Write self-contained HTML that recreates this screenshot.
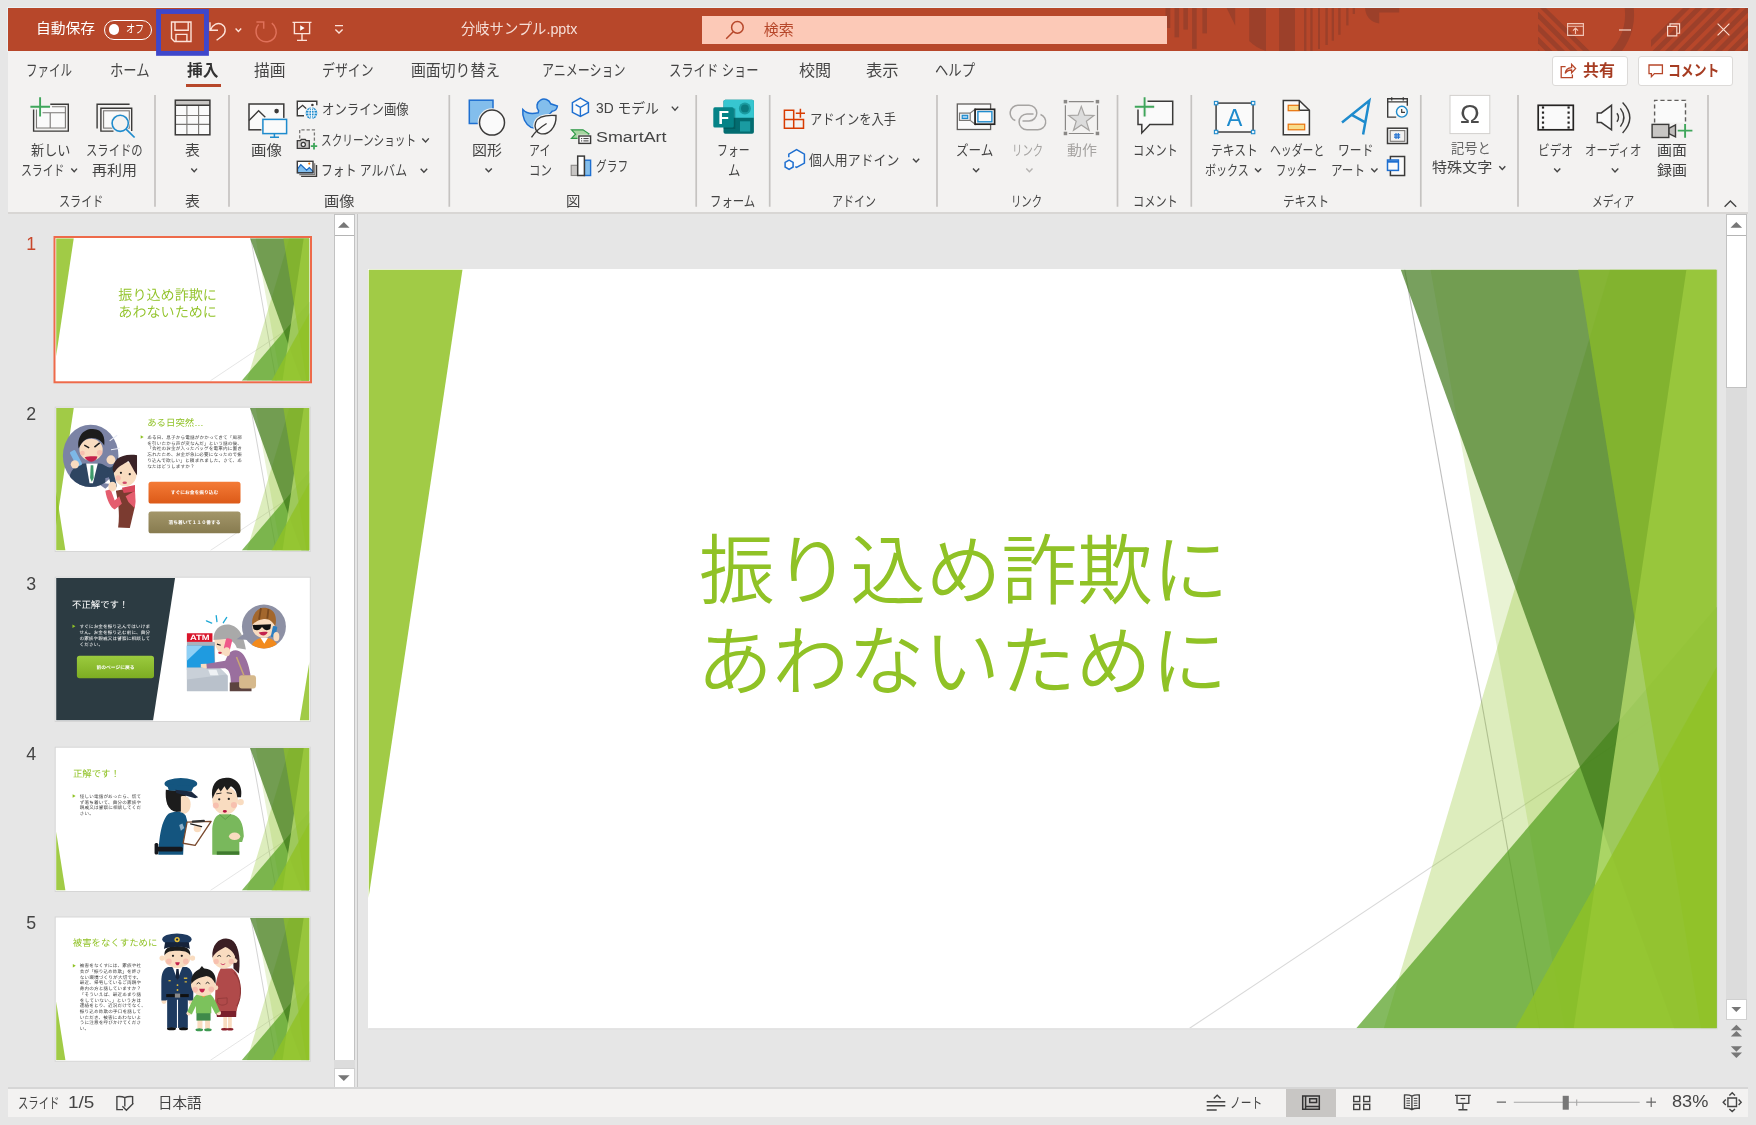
<!DOCTYPE html>
<html lang="ja"><head><meta charset="utf-8"><title>分岐サンプル.pptx - PowerPoint</title>
<style>
html,body{margin:0;padding:0}
body{width:1756px;height:1125px;overflow:hidden;background:#e6e6e6;font-family:"Liberation Sans","Noto Sans CJK JP",sans-serif;}
#win{position:absolute;left:0;top:0;width:1756px;height:1125px;overflow:hidden;will-change:transform}
.t{position:absolute;white-space:nowrap;line-height:1;transform-origin:0 50%;display:block}
.b{position:absolute}
svg{position:absolute;overflow:visible}
.sep{position:absolute;top:95px;width:1px;height:112px;background:#c6c4c2}
</style></head><body><div id="win">
<div class="b" style="left:7px;top:7px;width:1741px;height:1px;background:#ebf2f5"></div><div class="b" style="left:7px;top:7px;width:1px;height:45px;background:#ebf2f5"></div>
<div class="b" style="left:8px;top:8px;width:1740px;height:43.2px;background:#b7472a"></div>
<svg style="left:0;top:0" width="1756" height="60" viewBox="0 0 1756 60"><defs><clipPath id="tbc"><rect x="8" y="8" width="1740" height="43"/></clipPath><clipPath id="dg1"><polygon points="1538,8 1546,8 1590,51 1538,51"/></clipPath><clipPath id="dg2"><polygon points="1651,8 1748,8 1748,51 1651,51"/></clipPath></defs><g clip-path="url(#tbc)" fill="#9c402a"><rect x="1165.5" y="8" width="4.8" height="20.0"/><rect x="1174.5" y="8" width="4.6" height="29.3"/><rect x="1183.4" y="8" width="4.5" height="21.6"/><rect x="1192.1" y="8" width="4.6" height="40.8"/><rect x="1202.4" y="8" width="4.6" height="25.4"/><rect x="1279.1" y="8" width="15.9" height="43.0"/><rect x="1304" y="8" width="2.4" height="43.0"/><rect x="1310.3" y="8" width="2.3" height="43.0"/><rect x="1318" y="8" width="2.0" height="41.0"/><rect x="1325.4" y="8" width="2.4" height="37.0"/><rect x="1331.7" y="8" width="2.3" height="32.7"/><rect x="1338.2" y="8" width="2.4" height="26.8"/><rect x="1346.2" y="8" width="2.3" height="17.4"/><rect x="1352.7" y="8" width="2.3" height="6.0"/><polygon points="1226.6,8 1235.2,8 1235.2,25.4"/><path d="M1249.2 8H1266V51Q1256 48 1249.2 41Z"/><path d="M1365 8Q1366 21 1379.2 23.6V12.5H1399.2V8Z"/><g clip-path="url(#dg1)"><polygon points="1465.0,8 1472.0,8 1515.0,51 1508.0,51"/><polygon points="1477.5,8 1484.5,8 1527.5,51 1520.5,51"/><polygon points="1490.0,8 1497.0,8 1540.0,51 1533.0,51"/><polygon points="1502.5,8 1509.5,8 1552.5,51 1545.5,51"/><polygon points="1515.0,8 1522.0,8 1565.0,51 1558.0,51"/><polygon points="1527.5,8 1534.5,8 1577.5,51 1570.5,51"/><polygon points="1540.0,8 1547.0,8 1590.0,51 1583.0,51"/><polygon points="1552.5,8 1559.5,8 1602.5,51 1595.5,51"/><polygon points="1565.0,8 1572.0,8 1615.0,51 1608.0,51"/><polygon points="1577.5,8 1584.5,8 1627.5,51 1620.5,51"/><polygon points="1590.0,8 1597.0,8 1640.0,51 1633.0,51"/></g><path d="M1598 65A55.5 55.5 0 0 0 1618 -19" fill="none" stroke="#9c402a" stroke-width="9"/><g clip-path="url(#dg2)"><polygon points="1683.0,8 1690.0,8 1647.0,51 1640.0,51"/><polygon points="1695.5,8 1702.5,8 1659.5,51 1652.5,51"/><polygon points="1708.0,8 1715.0,8 1672.0,51 1665.0,51"/><polygon points="1720.5,8 1727.5,8 1684.5,51 1677.5,51"/><polygon points="1733.0,8 1740.0,8 1697.0,51 1690.0,51"/><polygon points="1745.5,8 1752.5,8 1709.5,51 1702.5,51"/><polygon points="1758.0,8 1765.0,8 1722.0,51 1715.0,51"/><polygon points="1770.5,8 1777.5,8 1734.5,51 1727.5,51"/><polygon points="1783.0,8 1790.0,8 1747.0,51 1740.0,51"/><polygon points="1795.5,8 1802.5,8 1759.5,51 1752.5,51"/><polygon points="1808.0,8 1815.0,8 1772.0,51 1765.0,51"/><polygon points="1820.5,8 1827.5,8 1784.5,51 1777.5,51"/></g></g></svg>
<span class="t" style="left:35.80px;top:22.13px;font-size:13.9px;color:#fff;transform:scaleX(1.0643);">自動保存</span>
<div class="b" style="left:103.5px;top:19.5px;width:46px;height:18px;border:1.3px solid #fff;border-radius:11px"></div>
<div class="b" style="left:108.5px;top:24.3px;width:10.5px;height:10.5px;border-radius:50%;background:#fff"></div>
<span class="t" style="left:126.00px;top:23.70px;font-size:11.5px;color:#fff;transform:scaleX(0.7917);">オフ</span>
<svg style="left:170px;top:21px" width="22" height="21" viewBox="0 0 22 21"><path fill="none" stroke="#fde3d9" stroke-width="1.4" d="M1.5 1H21V20.5H4.5L1.5 17.5Z M5 1V9.3H18.2V1 M6 20.5V13.4H16.9V20.5"/></svg>
<svg style="left:208px;top:20px" width="36" height="22" viewBox="0 0 36 22"><path fill="none" stroke="#fde3d9" stroke-width="1.4" d="M2 2.2V10.2H10 M2.6 9.8C5 4 10 2.4 13.4 4.2C18 6.6 18.6 12.4 14 16.2L8.6 20.2"/><path fill="none" stroke="#fde3d9" stroke-width="1.4" d="M27.6 8.6L30.4 11.4L33.2 8.6"/></svg>
<svg style="left:254px;top:20px" width="24" height="23" viewBox="0 0 24 23"><path fill="none" stroke="#e0715a" stroke-width="1.5" d="M4.6 4.6C0.6 9 1.4 16.6 6.4 20C11.4 23.4 18.4 21.8 21.2 16.4C23.4 12 22 6.4 17.8 3.2 M2.4 2H9.7V8.8"/></svg>
<svg style="left:292px;top:21px" width="21" height="21" viewBox="0 0 21 21"><path fill="none" stroke="#fde3d9" stroke-width="1.4" d="M0.5 1.4H19.5 M2.4 1.4V12.6H17.6V1.4 M10 12.6V19.2 M5 19.4H15"/><path fill="#fff" d="M8.2 4.2V9.8L12.6 7Z"/></svg>
<svg style="left:334px;top:24px" width="10" height="11" viewBox="0 0 10 11"><path fill="none" stroke="#fde3d9" stroke-width="1.4" d="M1 1.6H9 M1.4 5.4L5 9L8.6 5.4"/></svg>
<span class="t" style="left:461.30px;top:21.81px;font-size:14.7px;color:#f6ded7;transform:scaleX(0.9741);">分岐サンプル.pptx</span>
<div class="b" style="left:702px;top:16.3px;width:465px;height:27.5px;background:#fcc9b7"></div>
<svg style="left:725px;top:20px" width="20" height="20" viewBox="0 0 20 20"><path fill="none" stroke="#b7472a" stroke-width="1.5" d="M1.2 18.8L8.2 11.8"/><circle cx="12.4" cy="7.4" r="5.8" fill="none" stroke="#b7472a" stroke-width="1.5"/></svg>
<span class="t" style="left:763.80px;top:21.85px;font-size:15px;color:#b7472a;">検索</span>
<svg style="left:1567px;top:22.5px" width="18" height="13" viewBox="0 0 18 13"><path fill="none" stroke="#fbdccf" stroke-width="1.15" stroke-opacity=".85" d="M0.6 0.6H16.4V12.4H0.6Z M0.6 3.2H16.4 M8.5 11V5.2 M6 7.6L8.5 5.1L11 7.6"/></svg>
<svg style="left:1619px;top:29px" width="13" height="2" viewBox="0 0 13 2"><path fill="none" stroke="#fbdccf" stroke-width="1.15" d="M0 1H12"/></svg>
<svg style="left:1667px;top:22.5px" width="14" height="14" viewBox="0 0 14 14"><path fill="none" stroke="#fbdccf" stroke-width="1.15" d="M0.6 3.4H9.8V12.8H0.6Z M3 3.4V0.8H12.6V10.2H9.8"/></svg>
<svg style="left:1716.5px;top:23.2px" width="13" height="13" viewBox="0 0 13 13"><path fill="none" stroke="#fbdccf" stroke-width="1.15" d="M0.6 0.6L12.4 12.4 M12.4 0.6L0.6 12.4"/></svg>
<div class="b" style="left:8px;top:51.2px;width:1740px;height:160.8px;background:#f3f2f1"></div>
<div class="b" style="left:8px;top:212px;width:1740px;height:2px;background:#d8d6d4"></div>
<svg style="left:0;top:0" width="220" height="60" viewBox="0 0 220 60"><rect x="158.55" y="11.5" width="47.9" height="41.85" fill="none" stroke="#3e47cb" stroke-width="4.9"/></svg>
<span class="t" style="left:26.20px;top:62.98px;font-size:15.5px;color:#444;transform:scaleX(0.7437);">ファイル</span>
<span class="t" style="left:110.00px;top:62.98px;font-size:15.5px;color:#444;transform:scaleX(0.8604);">ホーム</span>
<span class="t" style="left:187.00px;top:62.98px;font-size:15.5px;color:#333;font-weight:700;transform:scaleX(1.0156);">挿入</span>
<span class="t" style="left:254.30px;top:62.98px;font-size:15.5px;color:#444;transform:scaleX(1.0156);">描画</span>
<span class="t" style="left:321.80px;top:62.98px;font-size:15.5px;color:#444;transform:scaleX(0.8312);">デザイン</span>
<span class="t" style="left:411.30px;top:62.98px;font-size:15.5px;color:#444;transform:scaleX(0.9583);">画面切り替え</span>
<span class="t" style="left:542.00px;top:62.98px;font-size:15.5px;color:#444;transform:scaleX(0.7750);">アニメーション</span>
<span class="t" style="left:668.80px;top:62.98px;font-size:15.5px;color:#444;transform:scaleX(0.7940);">スライド ショー</span>
<span class="t" style="left:799.30px;top:62.98px;font-size:15.5px;color:#444;transform:scaleX(1.0375);">校閲</span>
<span class="t" style="left:866.30px;top:62.98px;font-size:15.5px;color:#444;transform:scaleX(1.0531);">表示</span>
<span class="t" style="left:935.00px;top:62.98px;font-size:15.5px;color:#444;transform:scaleX(0.8604);">ヘルプ</span>
<div class="b" style="left:186.3px;top:83.7px;width:34.7px;height:3.2px;background:#b7472a"></div>
<div class="b" style="left:1552px;top:56.3px;width:74px;height:27.7px;background:#fff;border:1px solid #dcdad8;border-radius:3px"></div>
<div class="b" style="left:1638.3px;top:56.3px;width:92.7px;height:27.7px;background:#fff;border:1px solid #dcdad8;border-radius:3px"></div>
<svg style="left:1560px;top:63px" width="17" height="16" viewBox="0 0 17 16"><path fill="none" stroke="#b7472a" stroke-width="1.3" d="M5.6 3.6H1.2V14.6H12.4V11.6 M5.2 10.4C5.6 6.8 8.4 4.8 11.6 4.6V1.4L15.6 5.6L11.6 9.8V7C8.8 7 6.6 8 5.2 10.4Z"/></svg>
<span class="t" style="left:1582.50px;top:62.78px;font-size:15.5px;color:#a63c22;font-weight:700;transform:scaleX(1.0250);">共有</span>
<svg style="left:1648px;top:63.5px" width="16" height="14" viewBox="0 0 16 14"><path fill="none" stroke="#b7472a" stroke-width="1.3" d="M1 1H14.4V9.6H6.4L3.4 12.6V9.6H1Z"/></svg>
<span class="t" style="left:1668.30px;top:62.78px;font-size:15.5px;color:#a63c22;font-weight:700;transform:scaleX(0.8281);">コメント</span>
<svg style="left:0;top:0" width="1756" height="215" viewBox="0 0 1756 215"><path fill="none" stroke="#c5c3c1" stroke-width="1.7" d="M155.0 95V206.8M229.0 95V206.8M449.3 95V206.8M696.2 95V206.8M769.7 95V206.8M937.0 95V206.8M1117.5 95V206.8M1191.3 95V206.8M1420.8 95V206.8M1518.0 95V206.8M1708.0 95V206.8"/></svg>
<span class="t" style="left:30.80px;top:143.07px;font-size:14.2px;color:#444;transform:scaleX(0.9262);">新しい</span>
<span class="t" style="left:21.30px;top:162.67px;font-size:14.2px;color:#444;transform:scaleX(0.7661);">スライド</span>
<svg style="left:0;top:0" width="1" height="1"><path fill="none" stroke="#444" stroke-width="1.4" d="M71.3 168.6L74.2 171.7L77.0 168.6"/></svg>
<span class="t" style="left:85.80px;top:143.07px;font-size:14.2px;color:#444;transform:scaleX(0.7986);">スライドの</span>
<span class="t" style="left:92.00px;top:162.67px;font-size:14.2px;color:#444;transform:scaleX(1.0548);">再利用</span>
<span class="t" style="left:59.20px;top:193.67px;font-size:14.2px;color:#444;transform:scaleX(0.7821);">スライド</span>
<span class="t" style="left:185.00px;top:143.07px;font-size:14.2px;color:#444;transform:scaleX(1.0500);">表</span>
<svg style="left:0;top:0" width="1" height="1"><path fill="none" stroke="#444" stroke-width="1.4" d="M191.3 168.6L194.2 171.7L197.0 168.6"/></svg>
<span class="t" style="left:185.00px;top:193.67px;font-size:14.2px;color:#444;transform:scaleX(1.0500);">表</span>
<span class="t" style="left:251.30px;top:143.07px;font-size:14.2px;color:#444;transform:scaleX(1.0857);">画像</span>
<span class="t" style="left:321.80px;top:102.27px;font-size:14.2px;color:#444;transform:scaleX(0.8724);">オンライン画像</span>
<span class="t" style="left:321.30px;top:132.67px;font-size:14.2px;color:#444;transform:scaleX(0.7492);">スクリーンショット</span>
<svg style="left:0;top:0" width="1" height="1"><path fill="none" stroke="#444" stroke-width="1.4" d="M422.3 138.4L425.6 141.9L428.8 138.4"/></svg>
<span class="t" style="left:321.30px;top:163.07px;font-size:14.2px;color:#444;transform:scaleX(0.8341);">フォト アルバム</span>
<svg style="left:0;top:0" width="1" height="1"><path fill="none" stroke="#444" stroke-width="1.4" d="M420.7 168.7L423.9 172.2L427.2 168.7"/></svg>
<span class="t" style="left:324.00px;top:193.67px;font-size:14.2px;color:#444;transform:scaleX(1.0714);">画像</span>
<span class="t" style="left:472.30px;top:143.07px;font-size:14.2px;color:#444;transform:scaleX(1.0536);">図形</span>
<svg style="left:0;top:0" width="1" height="1"><path fill="none" stroke="#444" stroke-width="1.4" d="M485.5 168.5L488.6 171.8L491.8 168.5"/></svg>
<span class="t" style="left:529.30px;top:143.07px;font-size:14.2px;color:#444;transform:scaleX(0.7750);">アイ</span>
<span class="t" style="left:528.50px;top:162.67px;font-size:14.2px;color:#444;transform:scaleX(0.8036);">コン</span>
<span class="t" style="left:595.50px;top:101.37px;font-size:14.2px;color:#444;transform:scaleX(0.9731);">3D モデル</span>
<svg style="left:0;top:0" width="1" height="1"><path fill="none" stroke="#444" stroke-width="1.4" d="M671.8 106.6L675.0 110.1L678.2 106.6"/></svg>
<span class="t" style="left:595.50px;top:129.44px;font-size:15.4px;color:#444;transform:scaleX(1.1609);">SmartArt</span>
<span class="t" style="left:595.80px;top:158.87px;font-size:14.2px;color:#444;transform:scaleX(0.7548);">グラフ</span>
<span class="t" style="left:565.80px;top:193.67px;font-size:14.2px;color:#444;transform:scaleX(1.0143);">図</span>
<span class="t" style="left:717.00px;top:143.07px;font-size:14.2px;color:#444;transform:scaleX(0.7667);">フォー</span>
<span class="t" style="left:727.50px;top:162.67px;font-size:14.2px;color:#444;transform:scaleX(0.8714);">ム</span>
<span class="t" style="left:710.00px;top:193.67px;font-size:14.2px;color:#444;transform:scaleX(0.8036);">フォーム</span>
<span class="t" style="left:809.70px;top:112.27px;font-size:14.2px;color:#444;transform:scaleX(0.8673);">アドインを入手</span>
<span class="t" style="left:809.20px;top:153.07px;font-size:14.2px;color:#444;transform:scaleX(0.9092);">個人用アドイン</span>
<svg style="left:0;top:0" width="1" height="1"><path fill="none" stroke="#444" stroke-width="1.4" d="M913.0 158.7L916.1 162.0L919.2 158.7"/></svg>
<span class="t" style="left:831.70px;top:193.67px;font-size:14.2px;color:#444;transform:scaleX(0.7732);">アドイン</span>
<span class="t" style="left:955.50px;top:143.07px;font-size:14.2px;color:#444;transform:scaleX(0.8881);">ズーム</span>
<svg style="left:0;top:0" width="1" height="1"><path fill="none" stroke="#444" stroke-width="1.4" d="M973.0 168.5L976.1 171.8L979.2 168.5"/></svg>
<span class="t" style="left:1011.70px;top:143.07px;font-size:14.2px;color:#a6a4a2;transform:scaleX(0.7333);">リンク</span>
<svg style="left:0;top:0" width="1" height="1"><path fill="none" stroke="#b5b3b1" stroke-width="1.4" d="M1026.3 168.5L1029.4 171.8L1032.5 168.5"/></svg>
<span class="t" style="left:1066.70px;top:143.07px;font-size:14.2px;color:#a6a4a2;transform:scaleX(1.0571);">動作</span>
<span class="t" style="left:1011.30px;top:193.67px;font-size:14.2px;color:#444;transform:scaleX(0.7310);">リンク</span>
<span class="t" style="left:1132.50px;top:143.07px;font-size:14.2px;color:#444;transform:scaleX(0.7893);">コメント</span>
<span class="t" style="left:1132.50px;top:193.67px;font-size:14.2px;color:#444;transform:scaleX(0.7893);">コメント</span>
<span class="t" style="left:1210.80px;top:143.07px;font-size:14.2px;color:#444;transform:scaleX(0.8286);">テキスト</span>
<span class="t" style="left:1204.70px;top:162.67px;font-size:14.2px;color:#444;transform:scaleX(0.7786);">ボックス</span>
<svg style="left:0;top:0" width="1" height="1"><path fill="none" stroke="#444" stroke-width="1.4" d="M1255.0 168.5L1258.1 171.8L1261.2 168.5"/></svg>
<span class="t" style="left:1269.70px;top:143.07px;font-size:14.2px;color:#444;transform:scaleX(0.7657);">ヘッダーと</span>
<span class="t" style="left:1276.30px;top:162.67px;font-size:14.2px;color:#444;transform:scaleX(0.7214);">フッター</span>
<span class="t" style="left:1338.00px;top:143.07px;font-size:14.2px;color:#444;transform:scaleX(0.8333);">ワード</span>
<span class="t" style="left:1330.80px;top:162.67px;font-size:14.2px;color:#444;transform:scaleX(0.8143);">アート</span>
<svg style="left:0;top:0" width="1" height="1"><path fill="none" stroke="#444" stroke-width="1.4" d="M1371.3 168.5L1374.4 171.8L1377.5 168.5"/></svg>
<span class="t" style="left:1282.50px;top:193.67px;font-size:14.2px;color:#444;transform:scaleX(0.8179);">テキスト</span>
<span class="t" style="left:1450.80px;top:140.67px;font-size:14.2px;color:#666;transform:scaleX(0.9333);">記号と</span>
<span class="t" style="left:1432.20px;top:160.27px;font-size:14.2px;color:#444;transform:scaleX(1.0625);">特殊文字</span>
<svg style="left:0;top:0" width="1" height="1"><path fill="none" stroke="#444" stroke-width="1.4" d="M1499.3 166.2L1502.3 169.4L1505.3 166.2"/></svg>
<span class="t" style="left:1538.00px;top:143.07px;font-size:14.2px;color:#444;transform:scaleX(0.8214);">ビデオ</span>
<svg style="left:0;top:0" width="1" height="1"><path fill="none" stroke="#444" stroke-width="1.4" d="M1554.2 168.5L1557.2 171.8L1560.3 168.5"/></svg>
<span class="t" style="left:1585.20px;top:143.07px;font-size:14.2px;color:#444;transform:scaleX(0.8071);">オーディオ</span>
<svg style="left:0;top:0" width="1" height="1"><path fill="none" stroke="#444" stroke-width="1.4" d="M1611.8 168.4L1615.0 171.9L1618.3 168.4"/></svg>
<span class="t" style="left:1656.80px;top:143.07px;font-size:14.2px;color:#444;transform:scaleX(1.0536);">画面</span>
<span class="t" style="left:1656.80px;top:162.67px;font-size:14.2px;color:#444;transform:scaleX(1.0536);">録画</span>
<span class="t" style="left:1592.20px;top:193.67px;font-size:14.2px;color:#444;transform:scaleX(0.7589);">メディア</span>
<svg style="left:0;top:0" width="1" height="1"><path fill="none" stroke="#444" stroke-width="1.4" d="M1724.6 206.8L1730.4 201L1736.2 206.8"/></svg>
<svg style="left:0;top:0" width="1756" height="215" viewBox="0 0 1756 215"><path fill="none" stroke="#3b3a39" stroke-width="1.4"  d="M50.3 104.3H68.3V131.1H33.6V109.4"/><path fill="#fafafa" stroke="#797775" stroke-width="1.1"  d="M52 106.7H65.4V128H36.5V109.4"/><path fill="none" stroke="#797775" stroke-width="1.1"  d="M42.5 112.8H65.4 M50.2 112.8V128"/><path fill="none" stroke="#3fa65b" stroke-width="1.9"  d="M40.1 97.3V116.6 M30.4 106.8H50"/><path fill="none" stroke="#3b3a39" stroke-width="1.4"  d="M97.1 128.6V104.3H129.6"/><path fill="none" stroke="#3b3a39" stroke-width="1.4"  d="M113.5 131.1H100.9V108.3H131.7V131"/><rect x="103.6" y="110.8" width="25.7" height="17.3" fill="#fafafa" stroke="#797775" stroke-width="1.1" /><circle cx="120.2" cy="123.3" r="9.6" fill="#f3f2f1"/><circle cx="120.2" cy="123.3" r="8.1" fill="#f3f2f1" stroke="#1e8bcd" stroke-width="1.6" /><path fill="none" stroke="#1e8bcd" stroke-width="1.7"  d="M125.8 128.9L134.6 137.5"/><rect x="175.3" y="100.2" width="34.6" height="34.6" fill="#fafafa"/><rect x="175.3" y="100.2" width="34.6" height="5.1" fill="#c8c6c4"/><path fill="none" stroke="#797775" stroke-width="1.1"  d="M186.9 105.3V134.8 M198.6 105.3V134.8 M175.3 115.5H209.9 M175.3 124.4H209.9"/><path fill="none" stroke="#3b3a39" stroke-width="1.4"  d="M175.3 105.3H209.9"/><rect x="175.3" y="100.2" width="34.6" height="34.6" fill="none" stroke="#3b3a39" stroke-width="1.5" /><rect x="249" y="104" width="34.8" height="25.8" fill="#fafafa" stroke="#3b3a39" stroke-width="1.5" /><path fill="none" stroke="#3b3a39" stroke-width="1.4"  d="M249 120.6L258.6 110.8L265.3 117.3"/><circle cx="276.6" cy="111.1" r="2.3" fill="#3b3a39"/><rect x="261.4" y="117.9" width="27" height="13" fill="#f3f2f1"/><rect x="262.9" y="119.4" width="23.7" height="14.2" fill="#fafafa" stroke="#1e8bcd" stroke-width="1.5" /><path fill="none" stroke="#1e8bcd" stroke-width="1.5"  d="M274.4 133.6V137.3 M270 137.3H279"/><path fill="#fafafa" stroke="#3b3a39" stroke-width="1.4"  d="M304 115.8H297.3V101.3H316.8V105.3"/><path fill="none" stroke="#3b3a39" stroke-width="1.3"  d="M297.3 109.8L302.6 105.3L306.6 109"/><circle cx="312.4" cy="105" r="1.3" fill="#3b3a39"/><circle cx="311.5" cy="113.1" r="6.9" fill="#f3f2f1"/><circle cx="311.5" cy="113.1" r="5.8" fill="#1e8bcd"/><path fill="none" stroke="#fff" stroke-width="0.9" d="M305.7 113.1H317.3 M311.5 107.3V118.9 M306.6 110.3H316.4 M306.6 115.9H316.4"/><ellipse cx="311.5" cy="113.1" rx="2.7" ry="5.6" fill="none" stroke="#fff" stroke-width="0.9"/><path fill="none" stroke="#797775" stroke-width="1.3" stroke-dasharray="3.2 2" d="M299.7 138.5V129.8H314.4V143.5"/><path fill="#c8c6c4" stroke="#3b3a39" stroke-width="1.3"  d="M297.3 140.7H300.4L301.4 139.3H305.2L306.2 140.7H309.3V148.4H297.3Z"/><circle cx="303.3" cy="144.5" r="2.1" fill="#fafafa" stroke="#3b3a39" stroke-width="1.2" /><path fill="none" stroke="#3fa65b" stroke-width="1.8"  d="M314 143V149.4 M310.8 146.2H317.2"/><path fill="none" stroke="#3b3a39" stroke-width="1.4"  d="M316.5 164.9V176.4H301.1"/><path fill="none" stroke="#797775" stroke-width="1.1"  d="M314.7 163.2V174.6H299.3"/><rect x="297.3" y="161.3" width="15.7" height="11.5" fill="#fff"/><path fill="#83beec" stroke="#1565c0" stroke-width="1.2"  d="M297.6 168.8L300.8 164.6L306.6 170.2L309.3 167.5L312.8 171.2V172.6H297.6Z"/><circle cx="309.3" cy="163.6" r="1.1" fill="#e8710a"/><rect x="297.3" y="161.3" width="15.7" height="11.5" fill="none" stroke="#3b3a39" stroke-width="1.4" /><rect x="469.3" y="100.2" width="23.7" height="23.3" fill="#83beec" stroke="#1e6fd0" stroke-width="1.5" /><circle cx="492" cy="122.6" r="14.3" fill="#f3f2f1"/><circle cx="492" cy="122.6" r="12.5" fill="#fafafa" stroke="#3b3a39" stroke-width="1.5" /><path fill="#83beec" stroke="#1e6fd0" stroke-width="1.5"  d="M522.8 109.6C526.5 113.8 531 114.6 538.2 112.8L538.6 110.8A7.1 7.1 0 1 1 550.7 103.8L557.4 106C557 109.4 555 111 552.2 111.2C551.4 112.6 550 113.4 549.2 114.4C551.4 117 552.4 119.6 552 122.4C548 128.6 537 129.6 531 127.4C525.4 124.4 522 117.4 522.8 109.6Z"/><path fill="#f3f2f1" stroke="#f3f2f1" stroke-width="3.4" d="M556 115.5C548 115 538 116 535.6 122.4C533.6 128 536.6 132.4 540.4 133.6C548 135.4 556.6 128 556 115.5Z"/><path fill="#fafafa" stroke="#3b3a39" stroke-width="1.4"  d="M556 115.5C548 115 538 116 535.6 122.4C533.6 128 536.6 132.4 540.4 133.6C548 135.4 556.6 128 556 115.5Z"/><path fill="none" stroke="#3b3a39" stroke-width="1.4"  d="M531.5 137.3C535 132 540 127.5 546.6 123.5"/><path fill="#fafafa" stroke="#1e6fd0" stroke-width="1.5"  d="M580.4 98.2L588.4 102.7V112.4L580.4 116.4L572.4 112.4V102.7Z"/><path fill="none" stroke="#1e6fd0" stroke-width="1.4"  d="M580.4 116V107.3L588 103 M580.4 107.3L575.6 104.6"/><path fill="#a8d5a2" stroke="#2e9947" stroke-width="1.2"  d="M571.5 129.8H583L589 133.8L586 138.4H571.5L575.5 134.2Z"/><rect x="577.6" y="134.7" width="14.3" height="10" fill="#f3f2f1"/><rect x="578.9" y="136" width="11.7" height="7.4" fill="#fafafa" stroke="#3b3a39" stroke-width="1.4" /><path fill="none" stroke="#3b3a39" stroke-width="1"  d="M581 138.6H582.2 M583.4 138.6H588.6 M581 140.9H582.2 M583.4 140.9H588.6"/><rect x="571.2" y="165.3" width="6.5" height="10.2" fill="#c8c6c4" stroke="#8a8886" stroke-width="1.1" /><rect x="584.4" y="160.2" width="6.2" height="15.3" fill="#83beec" stroke="#1e6fd0" stroke-width="1.4" /><rect x="577.7" y="156.1" width="6.7" height="19.4" fill="#fff" stroke="#3b3a39" stroke-width="1.5" /><rect x="723.5" y="99.8" width="30.4" height="34" rx="1.8" fill="#036c70"/><path fill="#37c6d0" d="M725.3 99.8H752.1A1.8 1.8 0 0 1 753.9 101.6V117.8H723.5V101.6A1.8 1.8 0 0 1 725.3 99.8Z"/><circle cx="744.9" cy="108.4" r="6" fill="#1a9ba1"/><circle cx="744.9" cy="108.4" r="3.9" fill="#0b7b80"/><rect x="740" y="121.3" width="10.2" height="10.2" fill="#1a9ba1"/><rect x="723.5" y="108.5" width="11.8" height="20.4" fill="#02494c" opacity=".45"/><rect x="713.3" y="107.3" width="20.5" height="20.2" rx="1.6" fill="#058387"/><text x="723.7" y="123.7" text-anchor="middle" font-family="Liberation Sans,sans-serif" font-weight="700" font-size="17.6" fill="#fff">F</text><path fill="none" stroke="#d83b01" stroke-width="1.5"  d="M784.4 110.2H793.7V128.2H784.4Z M784.4 119.5H803.5V128.2H793.7 M795.8 113.3H805 M800.4 108.8V117.8"/><path fill="#fafafa" stroke="#1e6fd0" stroke-width="1.5"  d="M788.8 157.3V154.2L796.6 149.7L804.4 154.2V163.1L796.6 167.5L795.3 166.7"/><path fill="#fafafa" stroke="#1e6fd0" stroke-width="1.5"  d="M789.1 160.1L793.1 162.4V167L789.1 169.3L785.1 167V162.4Z"/><rect x="957.3" y="104" width="33.3" height="25.5" fill="#fafafa" stroke="#605e5c" stroke-width="1.3" /><path fill="#fafafa" stroke="#797775" stroke-width="1.2"  d="M970.2 113.1L975.1 109.3V124.2L970.2 120.4"/><rect x="959.5" y="113.1" width="10.7" height="7.3" fill="#fafafa" stroke="#797775" stroke-width="1.2" /><rect x="962.2" y="115.3" width="5.5" height="3.2" fill="#9fcdf0" stroke="#1e8bcd" stroke-width="1.2" /><rect x="975.1" y="109.3" width="19.5" height="14.9" fill="#fafafa" stroke="#252423" stroke-width="1.7" /><rect x="977.9" y="111.6" width="14" height="10.2" fill="#fafafa" stroke="#1e8bcd" stroke-width="1.4" /><path fill="none" stroke="#a6a4a2" stroke-width="1.5"  d="M1022.5 120.9H1029A7.8 7.8 0 0 0 1029 105.3H1018A7.8 7.8 0 0 0 1015.33 120.43"/><path fill="none" stroke="#a6a4a2" stroke-width="1.5"  d="M1033.5 114H1027A7.9 7.9 0 0 0 1027 129.8H1037.8A7.9 7.9 0 0 0 1040.5 114.48"/><path fill="none" stroke="#8a8886" stroke-width="1.2"  d="M1068.8 101.6H1093.7 M1068.8 133.5H1093.7 M1065.4 105.3V130.2 M1097.5 105.3V130.2"/><rect x="1063.7" y="99.9" width="3.5" height="3.5" fill="#8a8886"/><rect x="1095.7" y="99.9" width="3.5" height="3.5" fill="#8a8886"/><rect x="1063.7" y="131.7" width="3.5" height="3.5" fill="#8a8886"/><rect x="1095.7" y="131.7" width="3.5" height="3.5" fill="#8a8886"/><polygon points="1081.3,106.4 1084.5,115.2 1093.9,115.5 1086.4,121.3 1089.1,130.3 1081.3,125.0 1073.5,130.3 1076.2,121.3 1068.7,115.5 1078.1,115.2" fill="#dcdcdc" stroke="#a6a4a2" stroke-width="1.2" /><path fill="#fafafa" stroke="#3b3a39" stroke-width="1.5"  d="M1147.5 101.3H1172.7V124.4H1149.8L1141.8 132.9V124.4H1138V109.6"/><path fill="none" stroke="#f3f2f1" stroke-width="4.4"  d="M1144.6 100V116.4 M1137 106.8H1154.2"/><path fill="none" stroke="#3b3a39" stroke-width="1.5"  d="M1147.5 101.3H1172.7V124.4H1149.8L1141.8 132.9V124.4H1138V109.6" opacity="0"/><path fill="none" stroke="#3fa65b" stroke-width="1.9"  d="M1144.6 97.3V116.4 M1134.8 106.8H1154.2"/><rect x="1216.1" y="103.1" width="37" height="28.9" fill="#fafafa" stroke="#555" stroke-width="1.7" /><rect x="1214.3999999999999" y="101.39999999999999" width="3.4" height="3.4" fill="#e8f3fb" stroke="#1e8bcd" stroke-width="1.1" /><rect x="1251.3999999999999" y="101.39999999999999" width="3.4" height="3.4" fill="#e8f3fb" stroke="#1e8bcd" stroke-width="1.1" /><rect x="1214.3999999999999" y="130.3" width="3.4" height="3.4" fill="#e8f3fb" stroke="#1e8bcd" stroke-width="1.1" /><rect x="1251.3999999999999" y="130.3" width="3.4" height="3.4" fill="#e8f3fb" stroke="#1e8bcd" stroke-width="1.1" /><text x="1234.6" y="126.2" text-anchor="middle" font-family="Liberation Sans,sans-serif" font-size="23.4" fill="#1e8bcd">A</text><path fill="#fafafa" stroke="#3b3a39" stroke-width="1.5"  d="M1283.3 100.4H1299.3L1309.4 110.2V134.8H1283.3Z"/><path fill="none" stroke="#3b3a39" stroke-width="1.4"  d="M1299.3 100.4V110.2H1309.4"/><rect x="1288.2" y="105.3" width="11.1" height="5.4" fill="#f8dc8c" stroke="#e8710a" stroke-width="1.2" /><rect x="1288.2" y="124.2" width="16.5" height="5.6" fill="#f8dc8c" stroke="#e8710a" stroke-width="1.2" /><path fill="none" stroke="#3b3a39" stroke-width="1.4"  d="M1299.3 104.6V110.2"/><path fill="none" stroke="#1e8bcd" stroke-width="2.5"  d="M1342 122.4L1369.3 100.6L1363.1 134.4 M1352.2 115.1L1364.8 122.2"/><path fill="#fafafa" stroke="#3b3a39" stroke-width="1.4"  d="M1396.2 117.1H1387.7V98.7H1407.3V105.8"/><path fill="none" stroke="#3b3a39" stroke-width="1.3"  d="M1387.7 101.8H1407.3 M1391.7 97.2V100.6 M1403.3 97.2V100.6"/><circle cx="1401.9" cy="111.7" r="6.7" fill="#f3f2f1"/><circle cx="1401.9" cy="111.7" r="5.4" fill="#fafafa" stroke="#1e8bcd" stroke-width="1.4" /><path fill="none" stroke="#3b3a39" stroke-width="1.2"  d="M1401.7 108.9V112.3H1405"/><rect x="1387.5" y="128.2" width="19.9" height="15.3" fill="#fafafa" stroke="#3b3a39" stroke-width="1.5" /><rect x="1390.2" y="130.6" width="14.6" height="10.7" fill="#f3f2f1" stroke="#797775" stroke-width="1.1" /><path fill="none" stroke="#1e6fd0" stroke-width="1.1"  d="M1396 133V139 M1398.3 133V139 M1394 134.9H1400.2 M1394 137.1H1400.2"/><path fill="#fafafa" stroke="#3b3a39" stroke-width="1.5"  d="M1390.4 160V156.4H1404.6V175.5H1390.4V170.4"/><rect x="1387.5" y="160" width="10.9" height="10.4" fill="#fafafa" stroke="#1e6fd0" stroke-width="1.5" /><path fill="none" stroke="#1e6fd0" stroke-width="2.2"  d="M1387.5 161.6H1398.4"/><rect x="1450" y="95.4" width="39.8" height="38.2" fill="#fff" stroke="#d2d0ce" stroke-width="1"/><text x="1470" y="123.3" text-anchor="middle" font-family="Liberation Sans,sans-serif" font-size="26.5" fill="#4a4a4a">Ω</text><rect x="1538.2" y="105.3" width="35.1" height="24.5" fill="#fafafa" stroke="#252423" stroke-width="1.7" /><rect x="1541.9" y="106.4" width="2.2" height="2.2" fill="#252423"/><rect x="1541.9" y="111.5" width="2.2" height="2.2" fill="#252423"/><rect x="1541.9" y="116.5" width="2.2" height="2.2" fill="#252423"/><rect x="1541.9" y="121.5" width="2.2" height="2.2" fill="#252423"/><rect x="1541.9" y="126.4" width="2.2" height="2.2" fill="#252423"/><rect x="1567.5" y="106.4" width="2.2" height="2.2" fill="#252423"/><rect x="1567.5" y="111.5" width="2.2" height="2.2" fill="#252423"/><rect x="1567.5" y="116.5" width="2.2" height="2.2" fill="#252423"/><rect x="1567.5" y="121.5" width="2.2" height="2.2" fill="#252423"/><rect x="1567.5" y="126.4" width="2.2" height="2.2" fill="#252423"/><path fill="#fafafa" stroke="#3b3a39" stroke-width="1.5"  d="M1597.3 112.9H1601.3L1611.5 105.3V129.8L1601.3 122.6H1597.3Z"/><path fill="none" stroke="#3b3a39" stroke-width="1.4"  d="M1616.9 113.3Q1620.2 117.5 1616.9 121.8 M1620.4 108.4Q1627.4 117.5 1620.4 126.6 M1622.6 102.5Q1637 117.7 1622.6 132.9"/><path fill="#fafafa" stroke="#605e5c" stroke-width="1.4" stroke-dasharray="4.2 2.8" d="M1654.6 122.6V100.4H1685.5V122.6"/><path fill="#c0bebc" stroke="#3b3a39" stroke-width="1.4"  d="M1668.8 128.4L1675.5 124.9V136.9L1668.8 133.6Z"/><rect x="1652.1" y="124.4" width="16.7" height="13.1" fill="#c8c6c4" stroke="#3b3a39" stroke-width="1.4" /><path fill="none" stroke="#3fa65b" stroke-width="1.9"  d="M1677.7 130.6H1692.4 M1685.1 124V137.8"/></svg>
<div class="b" style="left:8px;top:214px;width:1740px;height:876px;background:#e6e6e6"></div>
<div class="b" style="left:357px;top:214px;width:1.2px;height:876px;background:#c6c6c6"></div>
<div class="b" style="left:334.2px;top:214.4px;width:18.6px;height:844.4px;background:#fff;border:1px solid #c2c2c2"></div>
<div class="b" style="left:335.2px;top:234.8px;width:18.6px;height:1.2px;background:#b4b4b4"></div>
<div class="b" style="left:334.2px;top:1060.2px;width:20.6px;height:7.6px;background:#dcdcdc"></div>
<div class="b" style="left:334.2px;top:1067.8px;width:18.6px;height:18px;background:#fff;border:1px solid #d0d0d0"></div>
<div class="b" style="left:1726.4px;top:214.4px;width:20.4px;height:805px;background:#dcdcdc"></div>
<div class="b" style="left:1726.4px;top:214.4px;width:18.4px;height:171.6px;background:#fff;border:1px solid #c2c2c2"></div>
<div class="b" style="left:1727.4px;top:234.6px;width:18.4px;height:1.2px;background:#b4b4b4"></div>
<div class="b" style="left:1726.4px;top:998.7px;width:18.4px;height:19px;background:#fff;border:1px solid #d0d0d0"></div>
<svg style="left:0;top:0" width="1756" height="1125" viewBox="0 0 1756 1125"><polygon points="343.8,222 349.6,227.8 338,227.8" fill="#777"/><polygon points="343.8,1081 349.6,1075.2 338,1075.2" fill="#777"/><polygon points="1736.3,222 1742.1,227.8 1730.5,227.8" fill="#777"/><polygon points="1736.3,1012 1741.2,1007.1 1731.4,1007.1" fill="#777"/><polygon points="1736.4,1024.8 1742,1030.2 1730.8,1030.2" fill="#777"/><polygon points="1736.4,1031 1742,1036.4 1730.8,1036.4" fill="#777"/><polygon points="1736.4,1051.7 1742,1046.3 1730.8,1046.3" fill="#777"/><polygon points="1736.4,1057.9 1742,1052.5 1730.8,1052.5" fill="#777"/><rect x="368.5" y="269.5" width="1349.2" height="759.8" fill="#d9d9d9"/><rect x="368.0" y="269.0" width="1348.7" height="759.3" fill="#fff"/><clipPath id="mainclip"><rect x="368.5" y="269.5" width="1348.2" height="758.8"/></clipPath><g clip-path="url(#mainclip)"><line x1="1404.75" y1="269.50" x2="1539.57" y2="1028.30" stroke="#BFBFBF" stroke-width="1.1"/><line x1="1189.59" y1="1028.30" x2="1716.35" y2="676.83" stroke="#D9D9D9" stroke-width="1.1"/><polygon points="1609.99,269.50 1716.70,269.50 1716.70,1028.30 1383.79,1028.30" fill="#90C226" fill-opacity=".30"/><polygon points="1430.46,269.50 1716.70,269.50 1716.70,1028.30 1564.22,1028.30" fill="#90C226" fill-opacity=".20"/><polygon points="1716.70,606.74 1716.70,1028.30 1356.24,1028.30" fill="#54A021" fill-opacity=".72"/><polygon points="1400.72,269.50 1716.70,269.50 1716.70,1028.30 1674.10,1028.30" fill="#3F7819" fill-opacity=".70"/><polygon points="1686.45,269.50 1716.70,269.50 1716.70,1028.30 1573.69,1028.30" fill="#C0E474" fill-opacity=".70"/><polygon points="1578.14,269.50 1716.70,269.50 1716.70,1028.30 1700.82,1028.30" fill="#90C226" fill-opacity=".65"/><polygon points="1716.70,666.70 1716.70,1028.30 1515.41,1028.30" fill="#90C226" fill-opacity=".80"/><polygon points="368.50,269.50 462.49,269.50 368.50,897.96" fill="#90C226" fill-opacity=".85"/></g></svg>
<span class="t" style="left:698.50px;top:533.51px;font-size:76.4px;color:#90c226;font-weight:350;transform:scaleX(0.9898);">振り込め詐欺に</span>
<span class="t" style="left:696.50px;top:624.51px;font-size:76.4px;color:#90c226;font-weight:350;transform:scaleX(0.9918);">あわないために</span>
<svg style="left:0;top:0" width="360" height="1125" viewBox="0 0 360 1125" text-rendering="geometricPrecision" font-family="Liberation Sans,Noto Sans CJK JP,sans-serif"><rect x="54.5" y="237.0" width="256.5" height="145.28125000000003" fill="#fff" stroke="#ee6a4a" stroke-width="2"/><clipPath id="tc0"><rect x="0" y="0" width="1348.0" height="758.25"/></clipPath><g transform="translate(56.1,238.3) scale(0.18791)"><g clip-path="url(#tc0)"><rect width="1348.0" height="758.25" fill="#fff"/><line x1="1036.10" y1="0.00" x2="1170.90" y2="758.25" stroke="#BFBFBF" stroke-width="3.6"/><line x1="820.97" y1="758.25" x2="1347.65" y2="407.03" stroke="#D9D9D9" stroke-width="3.6"/><polygon points="1241.31,0.00 1348.00,0.00 1348.00,758.25 1015.14,758.25" fill="#90C226" fill-opacity=".30"/><polygon points="1061.80,0.00 1348.00,0.00 1348.00,758.25 1195.54,758.25" fill="#90C226" fill-opacity=".20"/><polygon points="1348.00,337.00 1348.00,758.25 987.60,758.25" fill="#54A021" fill-opacity=".72"/><polygon points="1032.06,0.00 1348.00,0.00 1348.00,758.25 1305.41,758.25" fill="#3F7819" fill-opacity=".70"/><polygon points="1317.76,0.00 1348.00,0.00 1348.00,758.25 1205.01,758.25" fill="#C0E474" fill-opacity=".70"/><polygon points="1209.46,0.00 1348.00,0.00 1348.00,758.25 1332.12,758.25" fill="#90C226" fill-opacity=".65"/><polygon points="1348.00,396.91 1348.00,758.25 1146.74,758.25" fill="#90C226" fill-opacity=".80"/><polygon points="0.00,0.00 93.98,0.00 0.00,628.01" fill="#90C226" fill-opacity=".85"/><text x="331" y="325.9" font-size="76" fill="#90C226" font-weight="350" text-anchor="start" textLength="525" lengthAdjust="spacingAndGlyphs">振り込め詐欺に</text><text x="331" y="416.9" font-size="76" fill="#90C226" font-weight="350" text-anchor="start" textLength="525" lengthAdjust="spacingAndGlyphs">あわないために</text></g></g><rect x="55.2" y="407.2" width="255.10000000000002" height="144.28125000000003" fill="#fff" stroke="#d6d6d6" stroke-width="1"/><clipPath id="tc1"><rect x="0" y="0" width="1348.0" height="758.25"/></clipPath><g transform="translate(56.1,408.0) scale(0.18791)"><g clip-path="url(#tc1)"><rect width="1348.0" height="758.25" fill="#fff"/><line x1="1036.10" y1="0.00" x2="1170.90" y2="758.25" stroke="#BFBFBF" stroke-width="3.6"/><line x1="820.97" y1="758.25" x2="1347.65" y2="407.03" stroke="#D9D9D9" stroke-width="3.6"/><polygon points="1241.31,0.00 1348.00,0.00 1348.00,758.25 1015.14,758.25" fill="#90C226" fill-opacity=".30"/><polygon points="1061.80,0.00 1348.00,0.00 1348.00,758.25 1195.54,758.25" fill="#90C226" fill-opacity=".20"/><polygon points="1348.00,337.00 1348.00,758.25 987.60,758.25" fill="#54A021" fill-opacity=".72"/><polygon points="1032.06,0.00 1348.00,0.00 1348.00,758.25 1305.41,758.25" fill="#3F7819" fill-opacity=".70"/><polygon points="1317.76,0.00 1348.00,0.00 1348.00,758.25 1205.01,758.25" fill="#C0E474" fill-opacity=".70"/><polygon points="1209.46,0.00 1348.00,0.00 1348.00,758.25 1332.12,758.25" fill="#90C226" fill-opacity=".65"/><polygon points="1348.00,396.91 1348.00,758.25 1146.74,758.25" fill="#90C226" fill-opacity=".80"/><polygon points="0.00,0.00 93.98,0.00 0.00,628.01" fill="#90C226" fill-opacity=".85"/><polygon points="0.00,443.72 49.61,758.25 0.00,758.25" fill="#90C226" fill-opacity=".85"/><ellipse cx="184" cy="255" rx="148" ry="166" fill="#7b83a5"/><polygon points="215,395 290,405 262,430" fill="#7b83a5"/><clipPath id="i2c"><ellipse cx="184" cy="255" rx="148" ry="166"/></clipPath><g clip-path="url(#i2c)"><path d="M70 420C60 340 100 300 150 296L232 296C262 300 280 330 300 310L330 262L352 286C330 340 300 370 262 372L262 425Z" fill="#2e4561"/><polygon points="160,296 222,296 196,400 178,400" fill="#fff"/><polygon points="184,305 198,305 200,372 190,392 181,372" fill="#3f9b6b"/></g><circle cx="292" cy="276" r="24" fill="#f9dcc0"/><ellipse cx="186" cy="222" rx="62" ry="58" fill="#f9dcc0"/><path d="M120 215C108 150 150 108 196 112C250 112 262 160 256 200C240 168 200 150 160 166C140 176 130 196 120 215Z" fill="#1c1c1c"/><circle cx="232" cy="238" r="15" fill="#f6b4a8" opacity=".7"/><circle cx="140" cy="240" r="13" fill="#f6b4a8" opacity=".7"/><path d="M150 198L176 212M232 186L204 208" stroke="#1c1c1c" stroke-width="8" fill="none"/><path d="M152 262C170 256 200 256 220 258C214 292 170 296 152 262Z" fill="#c3224c"/><rect x="90" y="224" width="32" height="88" rx="8" transform="rotate(-28 106 268)" fill="#7db8e8"/><circle cx="100" cy="300" r="22" fill="#f9dcc0"/><path d="M285 175L325 145M292 222L340 214" stroke="#e8ebf5" stroke-width="6" fill="none"/><clipPath id="i2w"><polygon points="230,230 432,230 432,470 392,640 230,640"/></clipPath><g clip-path="url(#i2w)"><path d="M318 440L420 420L420 640L330 636C340 560 330 500 318 440Z" fill="#7b3b30"/><path d="M262 440L290 432L312 492L336 470L350 510L312 540C290 530 270 490 262 440Z" fill="#e45d6e"/><path d="M370 470L420 440L425 540L385 500Z" fill="#e45d6e"/><path d="M350 425L420 410L420 445L360 452Z" fill="#d9485c"/><ellipse cx="368" cy="352" rx="60" ry="64" fill="#f9dcc0"/><path d="M300 350C296 270 350 240 432 252L432 360C410 330 400 300 384 282C360 300 330 310 312 340Z" fill="#3a2226"/><circle cx="330" cy="372" r="14" fill="#f6b4a8" opacity=".8"/><circle cx="345" cy="345" r="6" fill="#222"/><circle cx="392" cy="352" r="6" fill="#222"/><ellipse cx="365" cy="398" rx="12" ry="7" fill="#d04a6a"/><rect x="284" y="330" width="30" height="96" rx="8" transform="rotate(-14 299 378)" fill="#2e4561"/><ellipse cx="300" cy="418" rx="22" ry="26" fill="#f9dcc0"/></g><text x="484.8" y="94.4" font-size="50" fill="#90C226" font-weight="400" text-anchor="start">ある日突然…</text><polygon points="450,145.1 466,154.6 450,164.1" fill="#90C226"/><text x="484.8" y="163.4" font-size="24.4" fill="#3a3a3a" font-weight="400" text-anchor="start" textLength="504.0" lengthAdjust="spacing">ある日、息子から電話がかかってきて「風邪</text><text x="484.8" y="194.3" font-size="24.4" fill="#3a3a3a" font-weight="400" text-anchor="start" textLength="504.0" lengthAdjust="spacing">を引いたから声が変なんだ」という話の後、</text><text x="484.8" y="225.2" font-size="24.4" fill="#3a3a3a" font-weight="400" text-anchor="start" textLength="504.0" lengthAdjust="spacing">「会社のお金が入ったバッグを電車内に置き</text><text x="484.8" y="256.1" font-size="24.4" fill="#3a3a3a" font-weight="400" text-anchor="start" textLength="504.0" lengthAdjust="spacing">忘れたため、お金が急に必要になったので振</text><text x="484.8" y="287.0" font-size="24.4" fill="#3a3a3a" font-weight="400" text-anchor="start" textLength="504.0" lengthAdjust="spacing">り込んで欲しい」と頼まれました。さて、あ</text><text x="484.8" y="317.9" font-size="24.4" fill="#3a3a3a" font-weight="400" text-anchor="start" textLength="252.0" lengthAdjust="spacing">なたはどうしますか？</text><linearGradient id="gb1" x1="0" y1="0" x2="0" y2="1"><stop offset="0" stop-color="#f47b36"/><stop offset="1" stop-color="#dc5a18"/></linearGradient><rect x="491.8" y="392.7" width="489.59999999999997" height="116.10000000000002" rx="14" fill="url(#gb1)"/><text x="736.6" y="459.9" font-size="25.3" fill="#fff" font-weight="700" text-anchor="middle">すぐにお金を振り込む</text><linearGradient id="gb2" x1="0" y1="0" x2="0" y2="1"><stop offset="0" stop-color="#a3966a"/><stop offset="1" stop-color="#877b4f"/></linearGradient><rect x="491.8" y="551.4" width="489.59999999999997" height="115.60000000000002" rx="14" fill="url(#gb2)"/><text x="736.6" y="618.3" font-size="25.3" fill="#fff" font-weight="700" text-anchor="middle">落ち着いて１１０番する</text></g></g><rect x="55.2" y="577.2" width="255.10000000000002" height="144.28125000000003" fill="#fff" stroke="#d6d6d6" stroke-width="1"/><clipPath id="tc2"><rect x="0" y="0" width="1348.0" height="758.25"/></clipPath><g transform="translate(56.1,578.0) scale(0.18791)"><g clip-path="url(#tc2)"><rect width="1348.0" height="758.25" fill="#fff"/><polygon points="0,0 633,0 516,758.25 0,758.25" fill="#2c3b42"/><polygon points="1348.0,446 1348.0,758.25 1297,758.25" fill="#90C226" fill-opacity=".85"/><rect x="696" y="340" width="150" height="150" fill="#a9b2bd"/><rect x="696" y="294" width="136" height="46" fill="#d9152b"/><text x="764" y="331" font-size="40" font-weight="700" fill="#fff" text-anchor="middle" textLength="104" lengthAdjust="spacingAndGlyphs">ATM</text><polygon points="696,361 839,361 845,478 696,478" fill="#1f9be0"/><polygon points="696,361 780,361 696,440" fill="#8fd0f5"/><polygon points="696,478 870,478 914,520 914,603 696,603" fill="#b9c1cb"/><polygon points="696,478 870,478 905,514 696,540" fill="#c9d0d8"/><rect x="812" y="488" width="44" height="30" fill="#eef1f4" transform="skewX(20) translate(-180 0)"/><path d="M838 330C836 270 880 240 930 250C980 262 1000 320 1010 380L962 372C950 340 930 330 900 326C880 330 860 330 838 330Z" fill="#a9a9a9"/><path d="M842 328C870 330 900 322 920 330L926 392C900 420 868 410 860 384C850 370 844 350 842 328Z" fill="#f9dcc0"/><ellipse cx="872" cy="398" rx="10" ry="6" fill="#c8324f"/><path d="M856 352L876 358" stroke="#222" stroke-width="6"/><path d="M930 392C990 360 1030 440 1040 560L930 568C930 520 925 490 900 480L800 482L796 458L900 440C910 420 915 400 930 392Z" fill="#9a6f9e"/><path d="M770 458L800 456L802 482L770 476Z" fill="#f9dcc0"/><path d="M924 556L1040 552L1040 603L924 603Z" fill="#5c4340"/><rect x="974" y="518" width="90" height="70" rx="14" fill="#d6b98c"/><path d="M960 420L1000 520" stroke="#c9a873" stroke-width="8" fill="none"/><rect x="898" y="322" width="34" height="62" rx="9" transform="rotate(14 915 352)" fill="#ef5a8a"/><ellipse cx="908" cy="392" rx="18" ry="24" fill="#f9dcc0"/><path d="M800 228L828 240M852 200L856 232M908 210L890 238" stroke="#1fa9d6" stroke-width="7" stroke-linecap="round" fill="none"/><circle cx="1106" cy="258" r="117" fill="#8d90a4"/><polygon points="960,326 1010,290 1030,330" fill="#8d90a4"/><clipPath id="i3c"><circle cx="1106" cy="258" r="117"/></clipPath><g clip-path="url(#i3c)"><path d="M1030 390C1040 330 1080 318 1108 318C1140 318 1180 330 1186 390Z" fill="#f28a1c"/><polygon points="1088,318 1128,318 1108,350" fill="#fff"/></g><ellipse cx="1104" cy="262" rx="60" ry="56" fill="#f9dcc0"/><path d="M1044 250C1036 190 1080 150 1120 160C1170 168 1176 220 1166 256C1150 230 1130 214 1100 220C1080 224 1060 232 1044 250Z" fill="#a3672d"/><path d="M1090 160L1080 222M1130 166L1124 216" stroke="#7b4a1e" stroke-width="10" fill="none"/><path d="M1046 250L1144 246L1140 270C1128 282 1108 280 1100 264L1092 264C1084 282 1060 282 1050 270Z" fill="#111"/><path d="M1078 290C1092 286 1112 286 1126 288C1118 312 1090 312 1078 290Z" fill="#c3224c"/><rect x="1148" y="256" width="24" height="60" rx="6" transform="rotate(12 1160 286)" fill="#2d7fc1"/><ellipse cx="1172" cy="312" rx="16" ry="24" fill="#f9dcc0"/><text x="84.6" y="158.5" font-size="50" fill="#fff" font-weight="400" text-anchor="start">不正解です！</text><polygon points="87,247.45 103,256.95 87,266.45" fill="#90C226"/><text x="124" y="265.7" font-size="24.3" fill="#fff" font-weight="400" text-anchor="start" textLength="376.5" lengthAdjust="spacing">すぐにお金を振り込んではいけま</text><text x="124" y="297.2" font-size="24.3" fill="#fff" font-weight="400" text-anchor="start" textLength="376.5" lengthAdjust="spacing">せん。お金を振り込む前に、自分</text><text x="124" y="328.7" font-size="24.3" fill="#fff" font-weight="400" text-anchor="start" textLength="376.5" lengthAdjust="spacing">の家族や親戚又は警察に相談して</text><text x="124" y="360.2" font-size="24.3" fill="#fff" font-weight="400" text-anchor="start" textLength="125.5" lengthAdjust="spacing">ください。</text><linearGradient id="gb3" x1="0" y1="0" x2="0" y2="1"><stop offset="0" stop-color="#9bcb3e"/><stop offset="1" stop-color="#7dac22"/></linearGradient><rect x="110.7" y="414" width="410.3" height="119.20000000000005" rx="14" fill="url(#gb3)"/><text x="315.85" y="482.7" font-size="25.3" fill="#fff" font-weight="700" text-anchor="middle">前のページに戻る</text></g></g><rect x="55.2" y="747.2" width="255.10000000000002" height="144.28125000000003" fill="#fff" stroke="#d6d6d6" stroke-width="1"/><clipPath id="tc3"><rect x="0" y="0" width="1348.0" height="758.25"/></clipPath><g transform="translate(56.1,748.0) scale(0.18791)"><g clip-path="url(#tc3)"><rect width="1348.0" height="758.25" fill="#fff"/><line x1="1036.10" y1="0.00" x2="1170.90" y2="758.25" stroke="#BFBFBF" stroke-width="3.6"/><line x1="820.97" y1="758.25" x2="1347.65" y2="407.03" stroke="#D9D9D9" stroke-width="3.6"/><polygon points="1241.31,0.00 1348.00,0.00 1348.00,758.25 1015.14,758.25" fill="#90C226" fill-opacity=".30"/><polygon points="1061.80,0.00 1348.00,0.00 1348.00,758.25 1195.54,758.25" fill="#90C226" fill-opacity=".20"/><polygon points="1348.00,337.00 1348.00,758.25 987.60,758.25" fill="#54A021" fill-opacity=".72"/><polygon points="1032.06,0.00 1348.00,0.00 1348.00,758.25 1305.41,758.25" fill="#3F7819" fill-opacity=".70"/><polygon points="1317.76,0.00 1348.00,0.00 1348.00,758.25 1205.01,758.25" fill="#C0E474" fill-opacity=".70"/><polygon points="1209.46,0.00 1348.00,0.00 1348.00,758.25 1332.12,758.25" fill="#90C226" fill-opacity=".65"/><polygon points="1348.00,396.91 1348.00,758.25 1146.74,758.25" fill="#90C226" fill-opacity=".80"/><polygon points="0.00,443.72 49.61,758.25 0.00,758.25" fill="#90C226" fill-opacity=".85"/><path d="M584 222C580 280 590 330 640 340L690 336L690 230Z" fill="#1c1c1c"/><path d="M664 258C690 250 716 262 716 300C716 340 690 356 664 350Z" fill="#f9dcc0"/><ellipse cx="664" cy="190" rx="87" ry="30" fill="#14557f"/><path d="M590 196L736 200L720 232L600 226Z" fill="#14557f"/><path d="M634 222L720 232L756 262L740 268L640 240Z" fill="#1b2940"/><path d="M600 348C640 330 680 340 690 360L712 440L760 420L770 450L700 492L680 480L676 568L544 568C548 480 560 380 600 348Z" fill="#14557f"/><rect x="530" y="525" width="144" height="26" rx="8" fill="#16181d"/><rect x="524" y="505" width="20" height="62" rx="8" fill="#16181d"/><polygon points="697,394 825,390 740,518 676,507" fill="#fff" stroke="#7a4a2e" stroke-width="7" stroke-linejoin="round"/><rect x="722" y="384" width="70" height="12" rx="5" fill="#333" transform="rotate(-3 757 390)"/><circle cx="752" cy="428" r="20" fill="#f9dcc0"/><path d="M716 404L774 418" stroke="#222" stroke-width="7" stroke-linecap="round"/><path d="M655 410L672 402L682 426L664 440Z" fill="#8fb0c8"/><circle cx="982" cy="288" r="17" fill="#f9dcc0"/><ellipse cx="900" cy="280" rx="68" ry="74" fill="#f9dcc0"/><path d="M832 270C820 200 850 160 905 158C960 156 996 200 984 262L964 262C960 230 950 214 930 204L910 226L896 204L876 232L864 214C848 230 842 250 832 270Z" fill="#1c1c1c"/><circle cx="850" cy="306" r="16" fill="#f6b4a8" opacity=".7"/><circle cx="946" cy="304" r="16" fill="#f6b4a8" opacity=".7"/><circle cx="868" cy="273" r="6" fill="#222"/><circle cx="919" cy="271" r="6" fill="#222"/><path d="M852 244L880 240M908 238L936 242" stroke="#222" stroke-width="5"/><ellipse cx="898" cy="337" rx="11" ry="7" fill="#b3123f"/><path d="M872 352L930 352C980 360 996 400 999 470L990 500L975 500L975 568L831 568L831 430C834 390 846 360 872 352Z" fill="#79b85c"/><rect x="855" y="550" width="120" height="18" fill="#3f7a2e"/><path d="M870 354L900 380L930 354" stroke="#5f9a46" stroke-width="5" fill="none"/><ellipse cx="950" cy="470" rx="30" ry="20" fill="#f9dcc0"/><text x="89.4" y="152.3" font-size="50" fill="#90C226" font-weight="400" text-anchor="start">正解です！</text><polygon points="88,246.25 104,255.75 88,265.25" fill="#90C226"/><text x="125.8" y="264.5" font-size="24.3" fill="#3a3a3a" font-weight="400" text-anchor="start" textLength="326.3" lengthAdjust="spacing">怪しい電話があったら、慌て</text><text x="125.8" y="295.7" font-size="24.3" fill="#3a3a3a" font-weight="400" text-anchor="start" textLength="326.3" lengthAdjust="spacing">ず落ち着いて、自分の家族や</text><text x="125.8" y="326.9" font-size="24.3" fill="#3a3a3a" font-weight="400" text-anchor="start" textLength="326.3" lengthAdjust="spacing">親戚又は警察に相談してくだ</text><text x="125.8" y="358.1" font-size="24.3" fill="#3a3a3a" font-weight="400" text-anchor="start" textLength="75.3" lengthAdjust="spacing">さい。</text></g></g><rect x="55.2" y="917.0" width="255.10000000000002" height="144.28125000000003" fill="#fff" stroke="#d6d6d6" stroke-width="1"/><clipPath id="tc4"><rect x="0" y="0" width="1348.0" height="758.25"/></clipPath><g transform="translate(56.1,917.8) scale(0.18791)"><g clip-path="url(#tc4)"><rect width="1348.0" height="758.25" fill="#fff"/><line x1="1036.10" y1="0.00" x2="1170.90" y2="758.25" stroke="#BFBFBF" stroke-width="3.6"/><line x1="820.97" y1="758.25" x2="1347.65" y2="407.03" stroke="#D9D9D9" stroke-width="3.6"/><polygon points="1241.31,0.00 1348.00,0.00 1348.00,758.25 1015.14,758.25" fill="#90C226" fill-opacity=".30"/><polygon points="1061.80,0.00 1348.00,0.00 1348.00,758.25 1195.54,758.25" fill="#90C226" fill-opacity=".20"/><polygon points="1348.00,337.00 1348.00,758.25 987.60,758.25" fill="#54A021" fill-opacity=".72"/><polygon points="1032.06,0.00 1348.00,0.00 1348.00,758.25 1305.41,758.25" fill="#3F7819" fill-opacity=".70"/><polygon points="1317.76,0.00 1348.00,0.00 1348.00,758.25 1205.01,758.25" fill="#C0E474" fill-opacity=".70"/><polygon points="1209.46,0.00 1348.00,0.00 1348.00,758.25 1332.12,758.25" fill="#90C226" fill-opacity=".65"/><polygon points="1348.00,396.91 1348.00,758.25 1146.74,758.25" fill="#90C226" fill-opacity=".80"/><polygon points="0.00,443.72 49.61,758.25 0.00,758.25" fill="#90C226" fill-opacity=".85"/><rect x="591" y="430" width="52" height="156" fill="#1e3a5f"/><rect x="649" y="430" width="52" height="156" fill="#1e3a5f"/><ellipse cx="614" cy="590" rx="24" ry="8" fill="#111"/><ellipse cx="678" cy="590" rx="24" ry="8" fill="#111"/><circle cx="574" cy="446" r="13" fill="#f9dcc0"/><circle cx="718" cy="448" r="13" fill="#f9dcc0"/><path d="M596 262L694 262C720 268 730 300 730 340L730 440L704 440L700 436L592 436L586 440L560 440L560 340C560 300 570 268 596 262Z" fill="#1e3a5f"/><polygon points="620,262 672,262 646,330" fill="#fff"/><polygon points="640,272 652,272 656,316 646,332 636,316" fill="#16233a"/><rect x="586" y="406" width="120" height="16" fill="#111"/><rect x="632" y="403" width="28" height="22" fill="#8a8a8a"/><circle cx="646" cy="358" r="5" fill="#e8c23a"/><circle cx="646" cy="384" r="5" fill="#e8c23a"/><rect x="680" y="318" width="18" height="7" fill="#e8c23a"/><rect x="598" y="332" width="12" height="6" fill="#e8c23a"/><rect x="684" y="338" width="12" height="6" fill="#e8c23a"/><circle cx="564" cy="214" r="14" fill="#f9dcc0"/><circle cx="726" cy="214" r="14" fill="#f9dcc0"/><ellipse cx="645" cy="212" rx="70" ry="56" fill="#f9dcc0"/><path d="M577 200C575 170 590 150 645 150C700 150 716 170 714 200C700 180 680 176 645 176C610 176 590 180 577 200Z" fill="#1c1c1c"/><ellipse cx="643" cy="114" rx="78" ry="31" fill="#1e3a5f"/><path d="M580 130L706 130L712 166C690 150 600 150 574 166Z" fill="#16233a"/><circle cx="644" cy="116" r="14" fill="#e8c23a"/><circle cx="644" cy="116" r="6" fill="#16233a"/><circle cx="600" cy="232" r="15" fill="#f6b4a8" opacity=".7"/><circle cx="690" cy="232" r="15" fill="#f6b4a8" opacity=".7"/><circle cx="622" cy="202" r="6" fill="#222"/><circle cx="669" cy="202" r="6" fill="#222"/><path d="M634 236L658 236C656 258 636 258 634 236Z" fill="#c3224c"/><rect x="890" y="520" width="20" height="70" fill="#f9dcc0"/><rect x="915" y="520" width="20" height="70" fill="#f9dcc0"/><ellipse cx="896" cy="593" rx="18" ry="7" fill="#8a1f2b"/><ellipse cx="926" cy="593" rx="18" ry="7" fill="#8a1f2b"/><path d="M850 492L960 492L958 528L856 528Z" fill="#7a1f2b"/><path d="M940 130C980 150 980 250 972 296L944 270Z" fill="#3b1f24"/><path d="M876 270L936 270C970 290 984 340 981 400C978 440 966 470 960 496L846 496C848 420 840 330 876 270Z" fill="#b04a4a"/><path d="M946 290C990 330 990 420 962 470" stroke="#8f3838" stroke-width="6" fill="none"/><path d="M860 430L910 426L910 456C890 470 870 466 860 452Z" fill="none" stroke="#8f3838" stroke-width="4"/><circle cx="952" cy="228" r="13" fill="#f9dcc0"/><ellipse cx="892" cy="208" rx="60" ry="62" fill="#f9dcc0"/><path d="M832 212C826 140 870 108 905 110C950 112 976 150 960 226C950 190 930 166 900 156C876 170 850 180 832 212Z" fill="#3b1f24"/><circle cx="852" cy="232" r="14" fill="#f6b4a8" opacity=".7"/><circle cx="932" cy="232" r="14" fill="#f6b4a8" opacity=".7"/><path d="M858 206Q868 194 878 206M908 206Q918 194 928 206" stroke="#222" stroke-width="5" fill="none"/><path d="M876 244Q888 256 900 244" stroke="#d0406a" stroke-width="5" fill="none"/><rect x="752" y="540" width="27" height="50" fill="#f9dcc0"/><rect x="793" y="540" width="26" height="50" fill="#f9dcc0"/><ellipse cx="762" cy="596" rx="20" ry="8" fill="#3f9a52"/><ellipse cx="808" cy="596" rx="20" ry="8" fill="#3f9a52"/><rect x="747" y="500" width="75" height="47" fill="#3f8a4a"/><circle cx="706" cy="508" r="12" fill="#f9dcc0"/><circle cx="866" cy="506" r="12" fill="#f9dcc0"/><path d="M748 408L822 408C840 420 860 470 872 498L848 512L826 470L826 508L744 508L744 470L722 514L698 500C712 470 730 420 748 408Z" fill="#7cc25c"/><path d="M766 408L804 408L785 424Z" fill="#f0a050"/><circle cx="850" cy="372" r="13" fill="#f9dcc0"/><ellipse cx="784" cy="358" rx="66" ry="58" fill="#f9dcc0"/><path d="M720 352C712 300 750 268 790 270C836 272 856 310 848 352C836 326 820 312 800 310C776 316 740 322 720 352Z" fill="#1c1c1c"/><path d="M760 276L776 256L790 274Z" fill="#1c1c1c"/><circle cx="740" cy="382" r="15" fill="#f6b4a8" opacity=".75"/><circle cx="826" cy="380" r="15" fill="#f6b4a8" opacity=".75"/><path d="M748 352Q758 338 768 352M796 350Q806 336 816 350" stroke="#222" stroke-width="5" fill="none"/><path d="M762 378L792 378C790 404 764 404 762 378Z" fill="#c3224c"/><text x="88.9" y="151.6" font-size="50" fill="#90C226" font-weight="400" text-anchor="start">被害をなくすために</text><polygon points="89,245.55 105,255.05 89,264.55" fill="#90C226"/><text x="125.8" y="263.8" font-size="24.3" fill="#3a3a3a" font-weight="400" text-anchor="start" textLength="326.3" lengthAdjust="spacing">被害をなくすには、家族や社</text><text x="125.8" y="294.1" font-size="24.3" fill="#3a3a3a" font-weight="400" text-anchor="start" textLength="326.3" lengthAdjust="spacing">会が「振り込め詐欺」を許さ</text><text x="125.8" y="324.5" font-size="24.3" fill="#3a3a3a" font-weight="400" text-anchor="start" textLength="326.3" lengthAdjust="spacing">ない環境づくりが大切です。</text><text x="125.8" y="354.8" font-size="24.3" fill="#3a3a3a" font-weight="400" text-anchor="start" textLength="326.3" lengthAdjust="spacing">最近、帰宅しているご両親や</text><text x="125.8" y="385.2" font-size="24.3" fill="#3a3a3a" font-weight="400" text-anchor="start" textLength="326.3" lengthAdjust="spacing">身内の方と話していますか？</text><text x="125.8" y="415.5" font-size="24.3" fill="#3a3a3a" font-weight="400" text-anchor="start" textLength="326.3" lengthAdjust="spacing">「そういえば、最近あまり話</text><text x="125.8" y="445.8" font-size="24.3" fill="#3a3a3a" font-weight="400" text-anchor="start" textLength="326.3" lengthAdjust="spacing">をしていない。」という方は</text><text x="125.8" y="476.2" font-size="24.3" fill="#3a3a3a" font-weight="400" text-anchor="start" textLength="351.4" lengthAdjust="spacing">連絡をとり、近況だけでなく、</text><text x="125.8" y="506.5" font-size="24.3" fill="#3a3a3a" font-weight="400" text-anchor="start" textLength="326.3" lengthAdjust="spacing">振り込め詐欺の手口を話して</text><text x="125.8" y="536.9" font-size="24.3" fill="#3a3a3a" font-weight="400" text-anchor="start" textLength="326.3" lengthAdjust="spacing">いただき、被害にあわないよ</text><text x="125.8" y="567.2" font-size="24.3" fill="#3a3a3a" font-weight="400" text-anchor="start" textLength="326.3" lengthAdjust="spacing">うに注意を呼びかけてくださ</text><text x="125.8" y="597.5" font-size="24.3" fill="#3a3a3a" font-weight="400" text-anchor="start" textLength="50.2" lengthAdjust="spacing">い。</text></g></g></svg>
<span class="t" style="left:26.15px;top:235.87px;font-size:17.8px;color:#c8472b;">1</span>
<span class="t" style="left:26.15px;top:405.57px;font-size:17.8px;color:#444;">2</span>
<span class="t" style="left:26.15px;top:575.57px;font-size:17.8px;color:#444;">3</span>
<span class="t" style="left:26.15px;top:745.57px;font-size:17.8px;color:#444;">4</span>
<span class="t" style="left:26.15px;top:915.37px;font-size:17.8px;color:#444;">5</span>
<div class="b" style="left:8px;top:1087.4px;width:1740px;height:1.6px;background:#d6d6d6"></div>
<div class="b" style="left:8px;top:1089.4px;width:1740px;height:27.4px;background:#f3f2f1"></div>
<div class="b" style="left:1285.5px;top:1089.4px;width:50.7px;height:27.4px;background:#c8c6c4"></div>
<span class="t" style="left:18.00px;top:1095.86px;font-size:14.6px;color:#444;transform:scaleX(0.7083);">スライド</span>
<span class="t" style="left:68.00px;top:1094.60px;font-size:16.6px;color:#444;transform:scaleX(1.1405);">1/5</span>
<span class="t" style="left:157.50px;top:1096.07px;font-size:14.4px;color:#444;transform:scaleX(1.0119);">日本語</span>
<span class="t" style="left:1229.70px;top:1095.86px;font-size:14.6px;color:#444;transform:scaleX(0.7356);">ノート</span>
<span class="t" style="left:1672.20px;top:1094.40px;font-size:16.6px;color:#444;transform:scaleX(1.0946);">83%</span>
<svg style="left:0;top:0" width="1756" height="1125" viewBox="0 0 1756 1125"><path fill="none" stroke="#444" stroke-width="1.4" d="M124.8 1097.6C122.4 1096.4 119.6 1096.3 116.9 1096.6V1109.6H123 M124.8 1097.6C127.2 1096.4 130 1096.3 132.6 1096.6V1104.6 M124.8 1097.6V1106.4 M122.4 1106.2L126.4 1110.2L133.4 1103.2"/><path fill="none" stroke="#444" stroke-width="1.4" d="M1206.7 1101.7H1225.3 M1206.7 1105.8H1225.3 M1206.7 1110H1216.7 M1213.8 1098.4L1217.2 1095.2L1220.6 1098.4"/><path fill="none" stroke="#333" stroke-width="1.5" d="M1302.7 1096H1319.3V1109.3H1302.7Z M1305.6 1096V1109.3 M1305.6 1106.6H1319.3 M1309.7 1098.8H1316.6V1102.4H1309.7Z"/><rect x="1353.7" y="1096.4" width="6" height="5.2" fill="none" stroke="#444" stroke-width="1.4"/><rect x="1363.7" y="1096.4" width="6" height="5.2" fill="none" stroke="#444" stroke-width="1.4"/><rect x="1353.7" y="1104.3" width="6" height="5.2" fill="none" stroke="#444" stroke-width="1.4"/><rect x="1363.7" y="1104.3" width="6" height="5.2" fill="none" stroke="#444" stroke-width="1.4"/><path fill="none" stroke="#444" stroke-width="1.4" d="M1411.9 1096.2C1409.4 1094.8 1406.6 1094.7 1404.5 1095V1108.4C1407 1108.1 1409.6 1108.3 1411.9 1109.6C1414.2 1108.3 1416.8 1108.1 1419.3 1108.4V1095C1417.2 1094.7 1414.4 1094.8 1411.9 1096.2ZV1109.6"/><path fill="none" stroke="#444" stroke-width="1" d="M1406.4 1098.4H1410 M1406.4 1100.8H1410 M1406.4 1103.2H1410 M1406.4 1105.6H1410 M1413.8 1098.4H1417.4 M1413.8 1100.8H1417.4 M1413.8 1103.2H1417.4 M1413.8 1105.6H1417.4"/><path fill="none" stroke="#444" stroke-width="1.4" d="M1455 1095.4H1470.8 M1457 1095.4V1103.4H1468.8V1095.4 M1462.9 1103.4V1109.6 M1458.4 1109.8H1467.4 M1460.6 1098.6H1465.2"/><path fill="none" stroke="#666" stroke-width="1.2" d="M1496.8 1102.2H1506 M1646.3 1102.2H1656 M1651.2 1097.4V1107"/><path fill="none" stroke="#a6a6a6" stroke-width="1.1" d="M1513.8 1102.2H1639.7 M1576.7 1099.6V1105.8"/><rect x="1562.7" y="1095.8" width="6.1" height="13.9" fill="#777"/><path fill="none" stroke="#444" stroke-width="1.4" d="M1727.9 1098H1736.5V1106.5H1727.9Z M1729.4 1095.4L1732.2 1092.8L1735 1095.4 M1729.4 1109L1732.2 1111.6L1735 1109 M1725.8 1099.4L1723.2 1102.2L1725.8 1105 M1738.6 1099.4L1741.2 1102.2L1738.6 1105"/></svg>
</div></body></html>
